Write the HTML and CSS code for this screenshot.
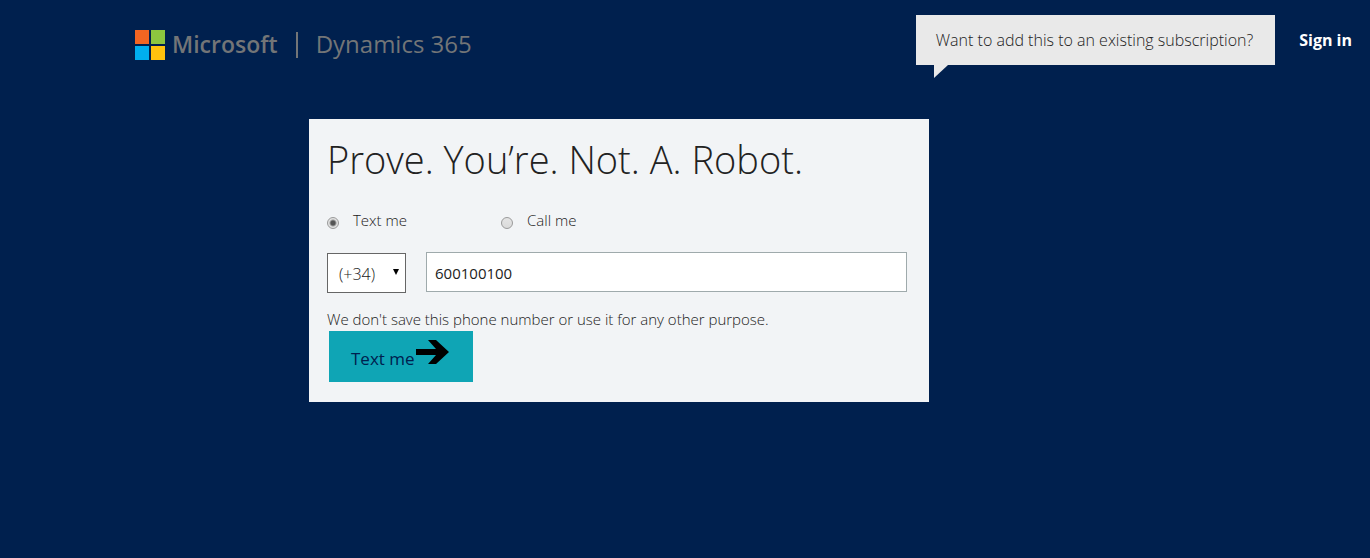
FILE: index.html
```html
<!DOCTYPE html>
<html lang="en">
<head>
<meta charset="utf-8">
<meta name="viewport" content="width=device-width, initial-scale=1">
<title>Microsoft Dynamics 365</title>
<link rel="stylesheet" href="styles.css">
</head>
<body>
<header class="header">
  <div class="brand">
    <svg class="brand-logo" viewBox="0 0 30 30" aria-hidden="true">
      <path fill="#f26522" d="M0 0h14v14H0z"/>
      <path fill="#8dc63f" d="M16 0h14v14H16z"/>
      <path fill="#00aeef" d="M0 16h14v14H0z"/>
      <path fill="#ffc20e" d="M16 16h14v14H16z"/>
    </svg>
    <span class="brand-name">Microsoft</span>
    <span class="brand-divider"></span>
    <span class="brand-product">Dynamics 365</span>
  </div>
  <nav class="account">
    <div class="callout">Want to add this to an existing subscription?</div>
    <a class="sign-in" href="#">Sign in</a>
  </nav>
</header>
<main class="main">
  <form class="card">
    <h1 class="title">Prove. You’re. Not. A. Robot.</h1>
    <div class="methods">
      <label class="method"><input class="radio" type="radio" name="method" checked><span>Text me</span></label>
      <label class="method"><input class="radio" type="radio" name="method"><span>Call me</span></label>
    </div>
    <div class="phone">
      <div class="code-wrap">
        <select class="code" aria-label="Country code"><option>(+34)</option></select>
        <svg class="caret" viewBox="0 0 6 6" aria-hidden="true"><path d="M0 0h6L3 6z"/></svg>
      </div>
      <input class="number" type="tel" value="600100100" aria-label="Phone number">
    </div>
    <p class="note">We don't save this phone number or use it for any other purpose.</p>
    <button class="submit" type="button"><span>Text me</span>
      <svg class="arrow" viewBox="0 0 33 24" aria-hidden="true"><path d="M0 9h20L12 0h8l13 12-13 12h-8l8-9H0z"/></svg>
    </button>
  </form>
</main>
</body>
</html>
```
FILE: styles.css
```css
* {
  box-sizing: border-box;
}

body {
  margin: 0;
  min-height: 100vh;
  background: #00204e;
  color: #222;
  font-family: "Open Sans", "Noto Sans", sans-serif;
  font-weight: 300;
  font-size: 15px;
}

.header {
  display: flex;
  justify-content: space-between;
  align-items: flex-start;
  padding: 15px 18px 0 135px;
}

.brand {
  display: flex;
  align-items: center;
  height: 60px;
  color: #737577;
  font-size: 24px;
  line-height: 32px;
  white-space: nowrap;
}

.brand-logo {
  width: 30px;
  height: 30px;
  margin-right: 7px;
}

.brand-name,
.brand-product {
  padding-bottom: 2px;
}

.brand-name {
  font-size: 23px;
  font-weight: 600;
}

.brand-divider {
  width: 2px;
  height: 26px;
  margin: 0 18px;
  background: #737577;
}

.brand-product {
  font-weight: 400;
}

.account {
  display: flex;
  align-items: center;
  gap: 24px;
  line-height: 50px;
  white-space: nowrap;
}

.callout {
  position: relative;
  padding: 0 22px 0 20px;
  background: #e9e9e9;
  font-size: 16px;
}

.callout::after {
  content: "";
  position: absolute;
  top: 100%;
  left: 18px;
  border-top: 13px solid #e9e9e9;
  border-right: 14px solid transparent;
}

.sign-in {
  color: #fff;
  font-size: 16px;
  font-weight: 700;
  text-decoration: none;
}

.main {
  padding: 44px 18px 18px 309px;
}

.card {
  max-width: 620px;
  padding: 13px 22px 20px 18px;
  background: #f2f4f6;
}

.title {
  margin: 0;
  font-size: 38px;
  font-weight: 300;
  line-height: 54px;
}

.methods {
  display: flex;
  margin-top: 22px;
}

.method {
  display: flex;
  align-items: center;
  width: 174px;
  line-height: 24px;
}

.radio {
  appearance: none;
  width: 12px;
  height: 12px;
  margin: 6px 14px 0 0;
  border: 1px solid #9a9a9a;
  border-radius: 50%;
  background: linear-gradient(#e4e4e4, #dadada);
}

.radio:checked {
  background: radial-gradient(circle, #555 0 2px, #e2e2e2 4px);
}

.phone {
  display: flex;
  align-items: flex-start;
  gap: 20px;
  margin-top: 20px;
}

.code-wrap {
  position: relative;
  width: 79px;
  padding-top: 1px;
}

.code,
.number {
  display: block;
  width: 100%;
  height: 40px;
  border: 1px solid #9faaac;
  border-radius: 0;
  background: #fff;
  color: #222;
  font: inherit;
}

.code {
  appearance: none;
  padding: 2px 11px 0;
  border-color: #666;
  font-size: 16px;
}

.caret {
  position: absolute;
  top: 17px;
  right: 7px;
  width: 6px;
  height: 6px;
  pointer-events: none;
}

.number {
  flex: 1;
  min-width: 0;
  padding: 2px 8px 0;
  font-weight: 400;
}

.note {
  margin: 15px 0 0;
  line-height: 23px;
}

.submit {
  display: flex;
  align-items: center;
  gap: 1px;
  height: 51px;
  margin: 0 2px;
  padding: 4px 24px 0 22px;
  border: 0;
  background: #0fa5b5;
  color: #00204e;
  font: inherit;
  font-size: 17px;
  font-weight: 400;
}

.arrow {
  width: 33px;
  height: 24px;
  margin-bottom: 14px;
  fill: #000;
}
```
